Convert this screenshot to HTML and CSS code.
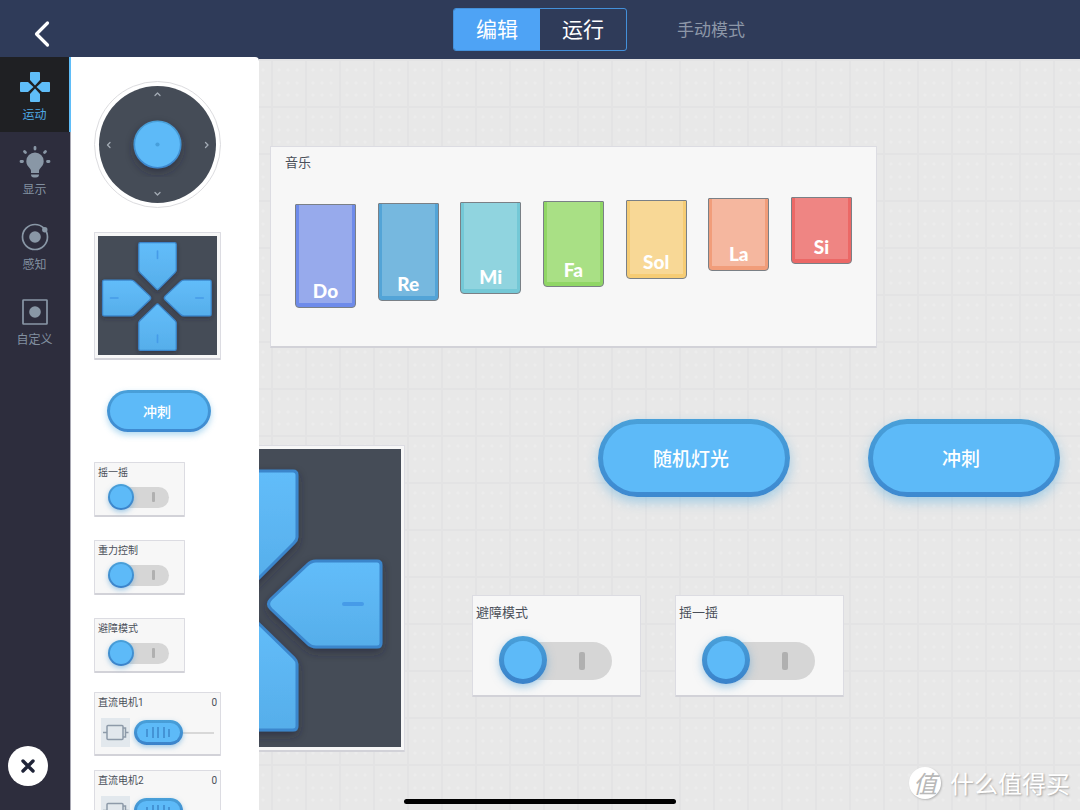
FILE: index.html
```html
<!DOCTYPE html>
<html lang="zh-CN">
<head>
<meta charset="utf-8">
<meta name="viewport" content="width=device-width, initial-scale=1">
<title>手动模式</title>
<link rel="stylesheet" href="styles.css">
</head>
<body>
<svg class="defs" aria-hidden="true">
  <defs>
    <linearGradient id="arm" x1="0" y1="0" x2="0" y2="1">
      <stop offset="0" stop-color="#62bdfa"/><stop offset="1" stop-color="#56aeea"/>
    </linearGradient>
    <linearGradient id="rim" x1="0" y1="0" x2="0" y2="1">
      <stop offset="0" stop-color="#49a0d9"/><stop offset="1" stop-color="#3c87cf"/>
    </linearGradient>
    <filter id="soft" x="-20%" y="-20%" width="140%" height="140%">
      <feDropShadow dx="0" dy="4" stdDeviation="5" flood-color="#1c2430" flood-opacity=".5"/>
    </filter>
    <symbol id="dpad" viewBox="0 0 298 298">
      <rect width="298" height="298" fill="#454c57"/>
      <g fill="url(#arm)" stroke="#3b86cc" stroke-width="3" stroke-linejoin="round" filter="url(#soft)">
        <path d="M108 22h82q4 0 4 4v62q0 3-3 6l-39 39q-3 3-6 0l-39-39q-3-3-3-6V26q0-4 4-4z"/>
        <path d="M108 281h82q4 0 4-4v-62q0-3-3-6l-39-38q-3-3-6 0l-39 38q-3 3-3 6v62q0 4 4 4z"/>
        <path d="M278 116v78q0 4-4 4h-61q-5 0-9-4l-36-34q-5-5 0-10l36-34q4-4 9-4h61q4 0 4 4z"/>
        <path d="M17 116v78q0 4 4 4h64q5 0 9-4l36-34q5-5 0-10l-36-34q-4-4-9-4H21q-4 0-4 4z"/>
      </g>
      <g stroke="#469be8" stroke-width="4" stroke-linecap="round">
        <path d="M149 42v18M149 244v18M241 155h18M36 155h18"/>
      </g>
    </symbol>
    <symbol id="motor" viewBox="0 0 29 29">
      <g fill="none" stroke="#8d9aa9" stroke-width="1.5">
        <rect x="6" y="7.5" width="16" height="14" rx="1"/>
        <path d="M2 14.500h4M22 10h2.500v9H22M24.500 14.500H27.500"/>
      </g>
    </symbol>
  </defs>
</svg>

<div class="app">
  <header class="topbar">
    <button class="back" aria-label="返回">
      <svg width="16" height="28" viewBox="0 0 16 28"><path d="M13.500 3L2.500 14l11 11" fill="none" stroke="#fff" stroke-width="3.200" stroke-linecap="round" stroke-linejoin="round"/></svg>
    </button>
    <div class="segment">
      <button class="segment-item is-on">编辑</button>
      <button class="segment-item">运行</button>
    </div>
    <p class="mode">手动模式</p>
  </header>

  <div class="workspace">
    <nav class="rail">
      <button class="rail-item is-active">
        <svg width="32" height="32" viewBox="0 0 32 32" fill="#5fbdf8"><path d="M12 1h8q1 0 1 1v7l-5 5.500L11 9V2q0-1 1-1zM12 31h8q1 0 1-1v-7l-5-5.500L11 23v7q0 1 1 1zM1 12v8q0 1 1 1h7l5.500-5L9 11H2q-1 0-1 1zM31 12v8q0 1-1 1h-7l-5.500-5L23 11h7q1 0 1 1z"/></svg>
        <span>运动</span>
      </button>
      <button class="rail-item">
        <svg width="32" height="32" viewBox="0 0 32 32"><path fill="#8997a6" d="M16 6.500a8.700 8.700 0 0 0-8.700 8.700c0 3.300 1.700 5 3 6.500 1.200 1.300 1.700 2 1.700 3.600V27h8v-1.700c0-1.600.5-2.300 1.700-3.600 1.300-1.500 3-3.200 3-6.500A8.700 8.700 0 0 0 16 6.500zM12 28.500h8q0 3-3 3h-2q-3 0-3-3z"/><path d="M16 1.500v1.500M5.500 5.500l1 1M26.500 5.500l-1 1M2 15.500h1.500M28.500 15.500h1.500" stroke="#8997a6" stroke-width="2.800" stroke-linecap="round"/></svg>
        <span>显示</span>
      </button>
      <button class="rail-item">
        <svg width="32" height="32" viewBox="0 0 32 32"><circle cx="16" cy="16" r="12.500" fill="none" stroke="#8997a6" stroke-width="1.700"/><circle cx="16" cy="16" r="5.800" fill="#8997a6"/><circle cx="25.800" cy="8.800" r="2.700" fill="#8997a6"/></svg>
        <span>感知</span>
      </button>
      <button class="rail-item">
        <svg width="32" height="32" viewBox="0 0 32 32"><rect x="4" y="4" width="24" height="24" rx=".5" fill="none" stroke="#8997a6" stroke-width="1.700"/><circle cx="16" cy="16" r="5.800" fill="#8997a6"/></svg>
        <span>自定义</span>
      </button>
      <button class="close" aria-label="关闭">
        <svg width="16" height="16" viewBox="0 0 16 16"><path d="M3 3l10 10M13 3L3 13" stroke="#1f2438" stroke-width="3.400" stroke-linecap="round"/></svg>
      </button>
    </nav>

    <aside class="palette">
      <svg class="joystick" viewBox="0 0 127 127" role="img" aria-label="摇杆">
        <circle cx="63.500" cy="63.500" r="63" fill="#fff" stroke="#dcdcdf"/>
        <circle cx="63.500" cy="63.500" r="58.500" fill="#454c57"/>
        <g fill="none" stroke="#a3abb5" stroke-width="1.300" stroke-linecap="round" stroke-linejoin="round">
          <path d="M61 14.500l2.500-2.500 2.500 2.500M61 111.500l2.500 2.500 2.500-2.500M16 61.500L13.500 64l2.500 2.500M111.500 61.500L114 64l-2.500 2.500"/>
        </g>
        <circle cx="63.500" cy="63.500" r="23.200" fill="#5dbaf8" stroke="url(#rim)" stroke-width="1.600" filter="url(#soft)"/>
        <circle cx="63.500" cy="63.500" r="2.100" fill="#479fdb"/>
      </svg>
      <div class="card pad-card"><svg viewBox="6 6 286 286"><use href="#dpad" width="298" height="298"/></svg></div>
      <button class="pill">冲刺</button>
      <div class="stack">
        <label class="card switch-card">摇一摇<input class="switch" type="checkbox"></label>
        <label class="card switch-card">重力控制<input class="switch" type="checkbox"></label>
        <label class="card switch-card">避障模式<input class="switch" type="checkbox"></label>
      </div>
      <div class="motors">
        <div class="card motor-card">
          <div class="motor-head"><label for="m1">直流电机1</label><output for="m1">0</output></div>
          <div class="motor-body"><svg class="motor-icon"><use href="#motor"/></svg><input id="m1" class="slider" type="range" value="0"></div>
        </div>
        <div class="card motor-card">
          <div class="motor-head"><label for="m2">直流电机2</label><output for="m2">0</output></div>
          <div class="motor-body"><svg class="motor-icon"><use href="#motor"/></svg><input id="m2" class="slider" type="range" value="0"></div>
        </div>
      </div>
    </aside>

    <main class="canvas">
      <section class="card music">
        <h2>音乐</h2>
        <div class="keys">
          <button class="key key-do">Do</button>
          <button class="key key-re">Re</button>
          <button class="key key-mi">Mi</button>
          <button class="key key-fa">Fa</button>
          <button class="key key-sol">Sol</button>
          <button class="key key-la">La</button>
          <button class="key key-si">Si</button>
        </div>
      </section>
      <div class="card pad-large"><svg viewBox="0 0 298 298"><use href="#dpad"/></svg></div>
      <button class="pill pill-large at-light">随机灯光</button>
      <button class="pill pill-large at-dash">冲刺</button>
      <label class="card switch-card switch-large at-avoid">避障模式<input class="switch" type="checkbox"></label>
      <label class="card switch-card switch-large at-shake">摇一摇<input class="switch" type="checkbox"></label>
      <div class="watermark"><span class="watermark-logo">值</span>什么值得买</div>
    </main>
  </div>
  <div class="home-bar"></div>
</div>
</body>
</html>
```
FILE: styles.css
```css
*, *::before, *::after { box-sizing: border-box; }

body {
  margin: 0;
  font-family: "Noto Sans CJK SC", sans-serif;
  color: #4a4f59;
}

button, input { font: inherit; margin: 0; }
button { border: 0; padding: 0; background: none; color: inherit; }
h2, p { margin: 0; font-weight: 400; }
svg { display: block; }
.defs { position: absolute; width: 0; height: 0; }

.app {
  position: relative;
  display: flex;
  flex-direction: column;
  height: 100vh;
  overflow: hidden;
}

/* Top bar */
.topbar {
  flex: none;
  display: grid;
  grid-template-columns: 1fr auto 1fr;
  align-items: center;
  height: 57px;
  padding-top: 2px;
  background: #2f3b59;
}
.back { justify-self: start; margin-left: 34px; padding-top: 8px; }
.segment {
  display: flex;
  height: 43px;
  border: 1px solid #4390da;
  border-radius: 3px;
  overflow: hidden;
}
.segment-item { width: 86px; font-size: 21px; line-height: 38px; padding-bottom: 3px; color: #fff; }
.segment-item.is-on { background: #4ea3f5; }
.mode { padding: 0 0 2px 50px; font-size: 17px; line-height: 24px; color: #8d97a8; }

.workspace { flex: 1; display: flex; min-height: 0; background: #2f3b59; }

/* Category rail */
.rail {
  flex: none;
  display: flex;
  flex-direction: column;
  width: 71px;
  background: #2d2d3d;
  box-shadow: inset -1px 0 #a9a9b4;
}
.rail-item {
  display: flex;
  flex-direction: column;
  align-items: center;
  gap: 2px;
  height: 75px;
  padding: 14px 2px 0 0;
  font-size: 12px;
  line-height: 18px;
  color: #8290a0;
}
.rail-item.is-active {
  background: #1f2023;
  color: #4fa9e4;
  box-shadow: inset -2px 0 #5fbdf8;
}
.close {
  display: grid;
  place-items: center;
  width: 40px;
  height: 40px;
  margin: auto 0 24px 8px;
  border-radius: 50%;
  background: #fff;
}

/* Shared widget frame */
.card {
  background: #f7f7f7;
  border: 1px solid #dcdce2;
  border-bottom: 2px solid #d2d2d8;
  border-radius: 1px;
}

/* Widget palette */
.palette {
  flex: none;
  display: flex;
  flex-direction: column;
  align-items: flex-start;
  width: 188px;
  padding: 24px 0 0 23px;
  overflow: hidden;
  background: #fff;
  border-top-right-radius: 4px;
}
.palette > * { flex: none; }
.joystick { width: 127px; height: 127px; overflow: visible; }
.pad-card { width: 127px; margin-top: 24px; padding: 3px; }

.pill {
  width: 104px;
  height: 42px;
  margin: 30px 0 0 13px;
  padding: 0 4px 0 0;
  border: 3px solid transparent;
  border-radius: 40px;
  background:
    linear-gradient(#5dbaf8, #5dbaf8) padding-box,
    linear-gradient(#49a0d9, #3d89d0) border-box;
  box-shadow: 0 3px 6px rgba(80, 170, 225, .45);
  font-size: 14px;
  font-weight: 500;
  line-height: 20px;
  color: #fff;
}

.stack { display: grid; gap: 23px; margin-top: 30px; }
.switch-card {
  display: flex;
  flex-direction: column;
  align-items: flex-start;
  width: 91px;
  height: 55px;
  padding: 1px 3px;
  font-size: 10px;
  line-height: 16px;
}
.switch {
  appearance: none;
  position: relative;
  width: 61px;
  height: 21px;
  margin: 7px 0 0 10px;
  border-radius: 14px;
  background: #d6d6d6;
}
.switch::before {
  content: "";
  position: absolute;
  left: 0;
  top: -3px;
  width: 26px;
  height: 26px;
  border: 2px solid transparent;
  border-radius: 50%;
  background:
    linear-gradient(#5dbaf8, #5dbaf8) padding-box,
    linear-gradient(#49a0d9, #3a82ca) border-box;
  box-shadow: 0 2px 5px rgba(80, 160, 215, .5);
}
.switch::after {
  content: "";
  position: absolute;
  right: 14px;
  top: 5px;
  width: 3px;
  height: 10px;
  border-radius: 1px;
  background: #b0b0b0;
}

.motors { display: grid; gap: 14px; margin-top: 19px; }
.motor-card { width: 127px; height: 64px; padding: 2px 3px; font-family: Roboto, "Noto Sans CJK SC", sans-serif; }
.motor-head {
  display: flex;
  justify-content: space-between;
  font-size: 10px;
  line-height: 16px;
}
.motor-body { display: flex; align-items: center; gap: 4px; padding: 7px 3px; }
.motor-icon { flex: none; width: 29px; height: 29px; background: #e2e8ed; }
.slider {
  appearance: none;
  flex: 1;
  min-width: 0;
  height: 25px;
  background: linear-gradient(#d8d8d8, #d8d8d8) center / 100% 2px no-repeat;
}
.slider::-webkit-slider-thumb {
  appearance: none;
  width: 49px;
  height: 25px;
  border: 3px solid transparent;
  border-radius: 13px;
  background:
    linear-gradient(#4494d6, #4494d6) 9px 50% / 2px 8px no-repeat padding-box,
    linear-gradient(#4494d6, #4494d6) 15px 50% / 2px 11px no-repeat padding-box,
    linear-gradient(#4494d6, #4494d6) 20px 50% / 2px 11px no-repeat padding-box,
    linear-gradient(#4494d6, #4494d6) 26px 50% / 2px 11px no-repeat padding-box,
    linear-gradient(#4494d6, #4494d6) 31px 50% / 2px 8px no-repeat padding-box,
    linear-gradient(#5dbaf8, #5dbaf8) padding-box,
    linear-gradient(#49a0d9, #3a82ca) border-box;
  box-shadow: 0 2px 5px rgba(80, 160, 215, .5);
}

/* Design canvas */
.canvas {
  position: relative;
  flex: 1;
  min-width: 0;
  overflow: hidden;
  border-top: 2px solid #2f3b59;
  background-color: #e8e8e8;
  background-image:
    linear-gradient(90deg, #e3e3e4 2px, transparent 2px),
    linear-gradient(#e3e3e4 2px, transparent 2px),
    radial-gradient(circle at 8px 11px, #ececec 1px, transparent 2px),
    radial-gradient(circle at 17px 11px, #ececec 1px, transparent 2px),
    radial-gradient(circle at 26px 11px, #ececec 1px, transparent 2px),
    radial-gradient(circle at 8px 24px, #ececec 1px, transparent 2px),
    radial-gradient(circle at 17px 24px, #ececec 1px, transparent 2px),
    radial-gradient(circle at 26px 24px, #ececec 1px, transparent 2px),
    radial-gradient(circle at 8px 36px, #ececec 1px, transparent 2px),
    radial-gradient(circle at 17px 36px, #ececec 1px, transparent 2px),
    radial-gradient(circle at 26px 36px, #ececec 1px, transparent 2px);
  background-size: 34px 47px;
  background-position: 12px 0;
}

.music {
  position: absolute;
  left: 11px;
  top: 87px;
  width: 607px;
  padding: 5px 24px 38px;
}
.music h2 { margin-left: -10px; font-size: 13px; line-height: 20px; }
.keys {
  display: flex;
  justify-content: space-between;
  align-items: flex-start;
  margin-top: 25px;
}
.key {
  display: flex;
  align-items: flex-end;
  justify-content: center;
  width: 61px;
  padding-bottom: 5px;
  border: 1px solid #7a8086;
  border-radius: 1px 1px 4px 4px;
  font-family: Lato, sans-serif;
  font-size: 19px;
  font-weight: 900;
  line-height: 22px;
  color: #fff;
}
.key-do { height: 104px; margin-top: 7px; background: #97aaec; box-shadow: inset 0 -4px #6e8bea, inset 3px 0 #6e8bea, inset -3px 0 #6e8bea; }
.key-re { height: 98px; margin-top: 6px; background: #76b8df; box-shadow: inset 0 -4px #53a4d7, inset 3px 0 #53a4d7, inset -3px 0 #53a4d7; }
.key-mi { height: 92px; margin-top: 5px; background: #90d4df; box-shadow: inset 0 -4px #74c8d6, inset 3px 0 #74c8d6, inset -3px 0 #74c8d6; }
.key-fa { height: 86px; margin-top: 4px; background: #a9e085; box-shadow: inset 0 -4px #90d665, inset 3px 0 #90d665, inset -3px 0 #90d665; }
.key-sol { height: 79px; margin-top: 3px; background: #f8d896; box-shadow: inset 0 -4px #f6cc74, inset 3px 0 #f6cc74, inset -3px 0 #f6cc74; }
.key-la { height: 73px; margin-top: 1px; background: #f5b79f; box-shadow: inset 0 -4px #f19d7a, inset 3px 0 #f19d7a, inset -3px 0 #f19d7a; }
.key-si { height: 67px; background: #ef8583; box-shadow: inset 0 -4px #ec6866, inset 3px 0 #ec6866, inset -3px 0 #ec6866; }

.pad-large {
  position: absolute;
  left: -160px;
  top: 386px;
  width: 306px;
  padding: 3px;
}

.pill-large {
  position: absolute;
  top: 360px;
  width: 192px;
  height: 78px;
  margin: 0;
  padding-right: 6px;
  border-width: 5px;
  box-shadow: 0 5px 12px rgba(80, 170, 225, .45);
  font-size: 19px;
  line-height: 28px;
}
.at-light { left: 339px; }
.at-dash { left: 609px; }

.switch-large {
  position: absolute;
  top: 536px;
  width: 169px;
  height: 102px;
  padding: 6px 3px;
  font-size: 13px;
  line-height: 20px;
}
.at-avoid { left: 213px; }
.at-shake { left: 416px; }
.switch-large .switch {
  width: 113px;
  height: 38px;
  margin: 20px 0 0 23px;
  border-radius: 19px;
}
.switch-large .switch::before {
  top: -6px;
  width: 48px;
  height: 48px;
  border-width: 5px;
  box-shadow: 0 3px 9px rgba(80, 160, 215, .5);
}
.switch-large .switch::after {
  right: 27px;
  top: 10px;
  width: 6px;
  height: 18px;
  border-radius: 2px;
}

.watermark {
  position: absolute;
  right: 10px;
  bottom: 9px;
  display: flex;
  align-items: center;
  gap: 9px;
  font-size: 24px;
  line-height: 36px;
  color: #fff;
  text-shadow: 1px 1px 2px #a0a0a0;
}
.watermark-logo {
  width: 32px;
  height: 32px;
  border-radius: 50%;
  background: #fff;
  box-shadow: 1px 1px 2px #b4b4b4;
  font-size: 24px;
  font-style: italic;
  line-height: 32px;
  text-align: center;
  text-shadow: none;
  color: #b8b8b8;
}

.home-bar {
  position: absolute;
  left: 50%;
  bottom: 6px;
  width: 272px;
  height: 5px;
  border-radius: 3px;
  background: #000;
  transform: translateX(-50%);
}
```
